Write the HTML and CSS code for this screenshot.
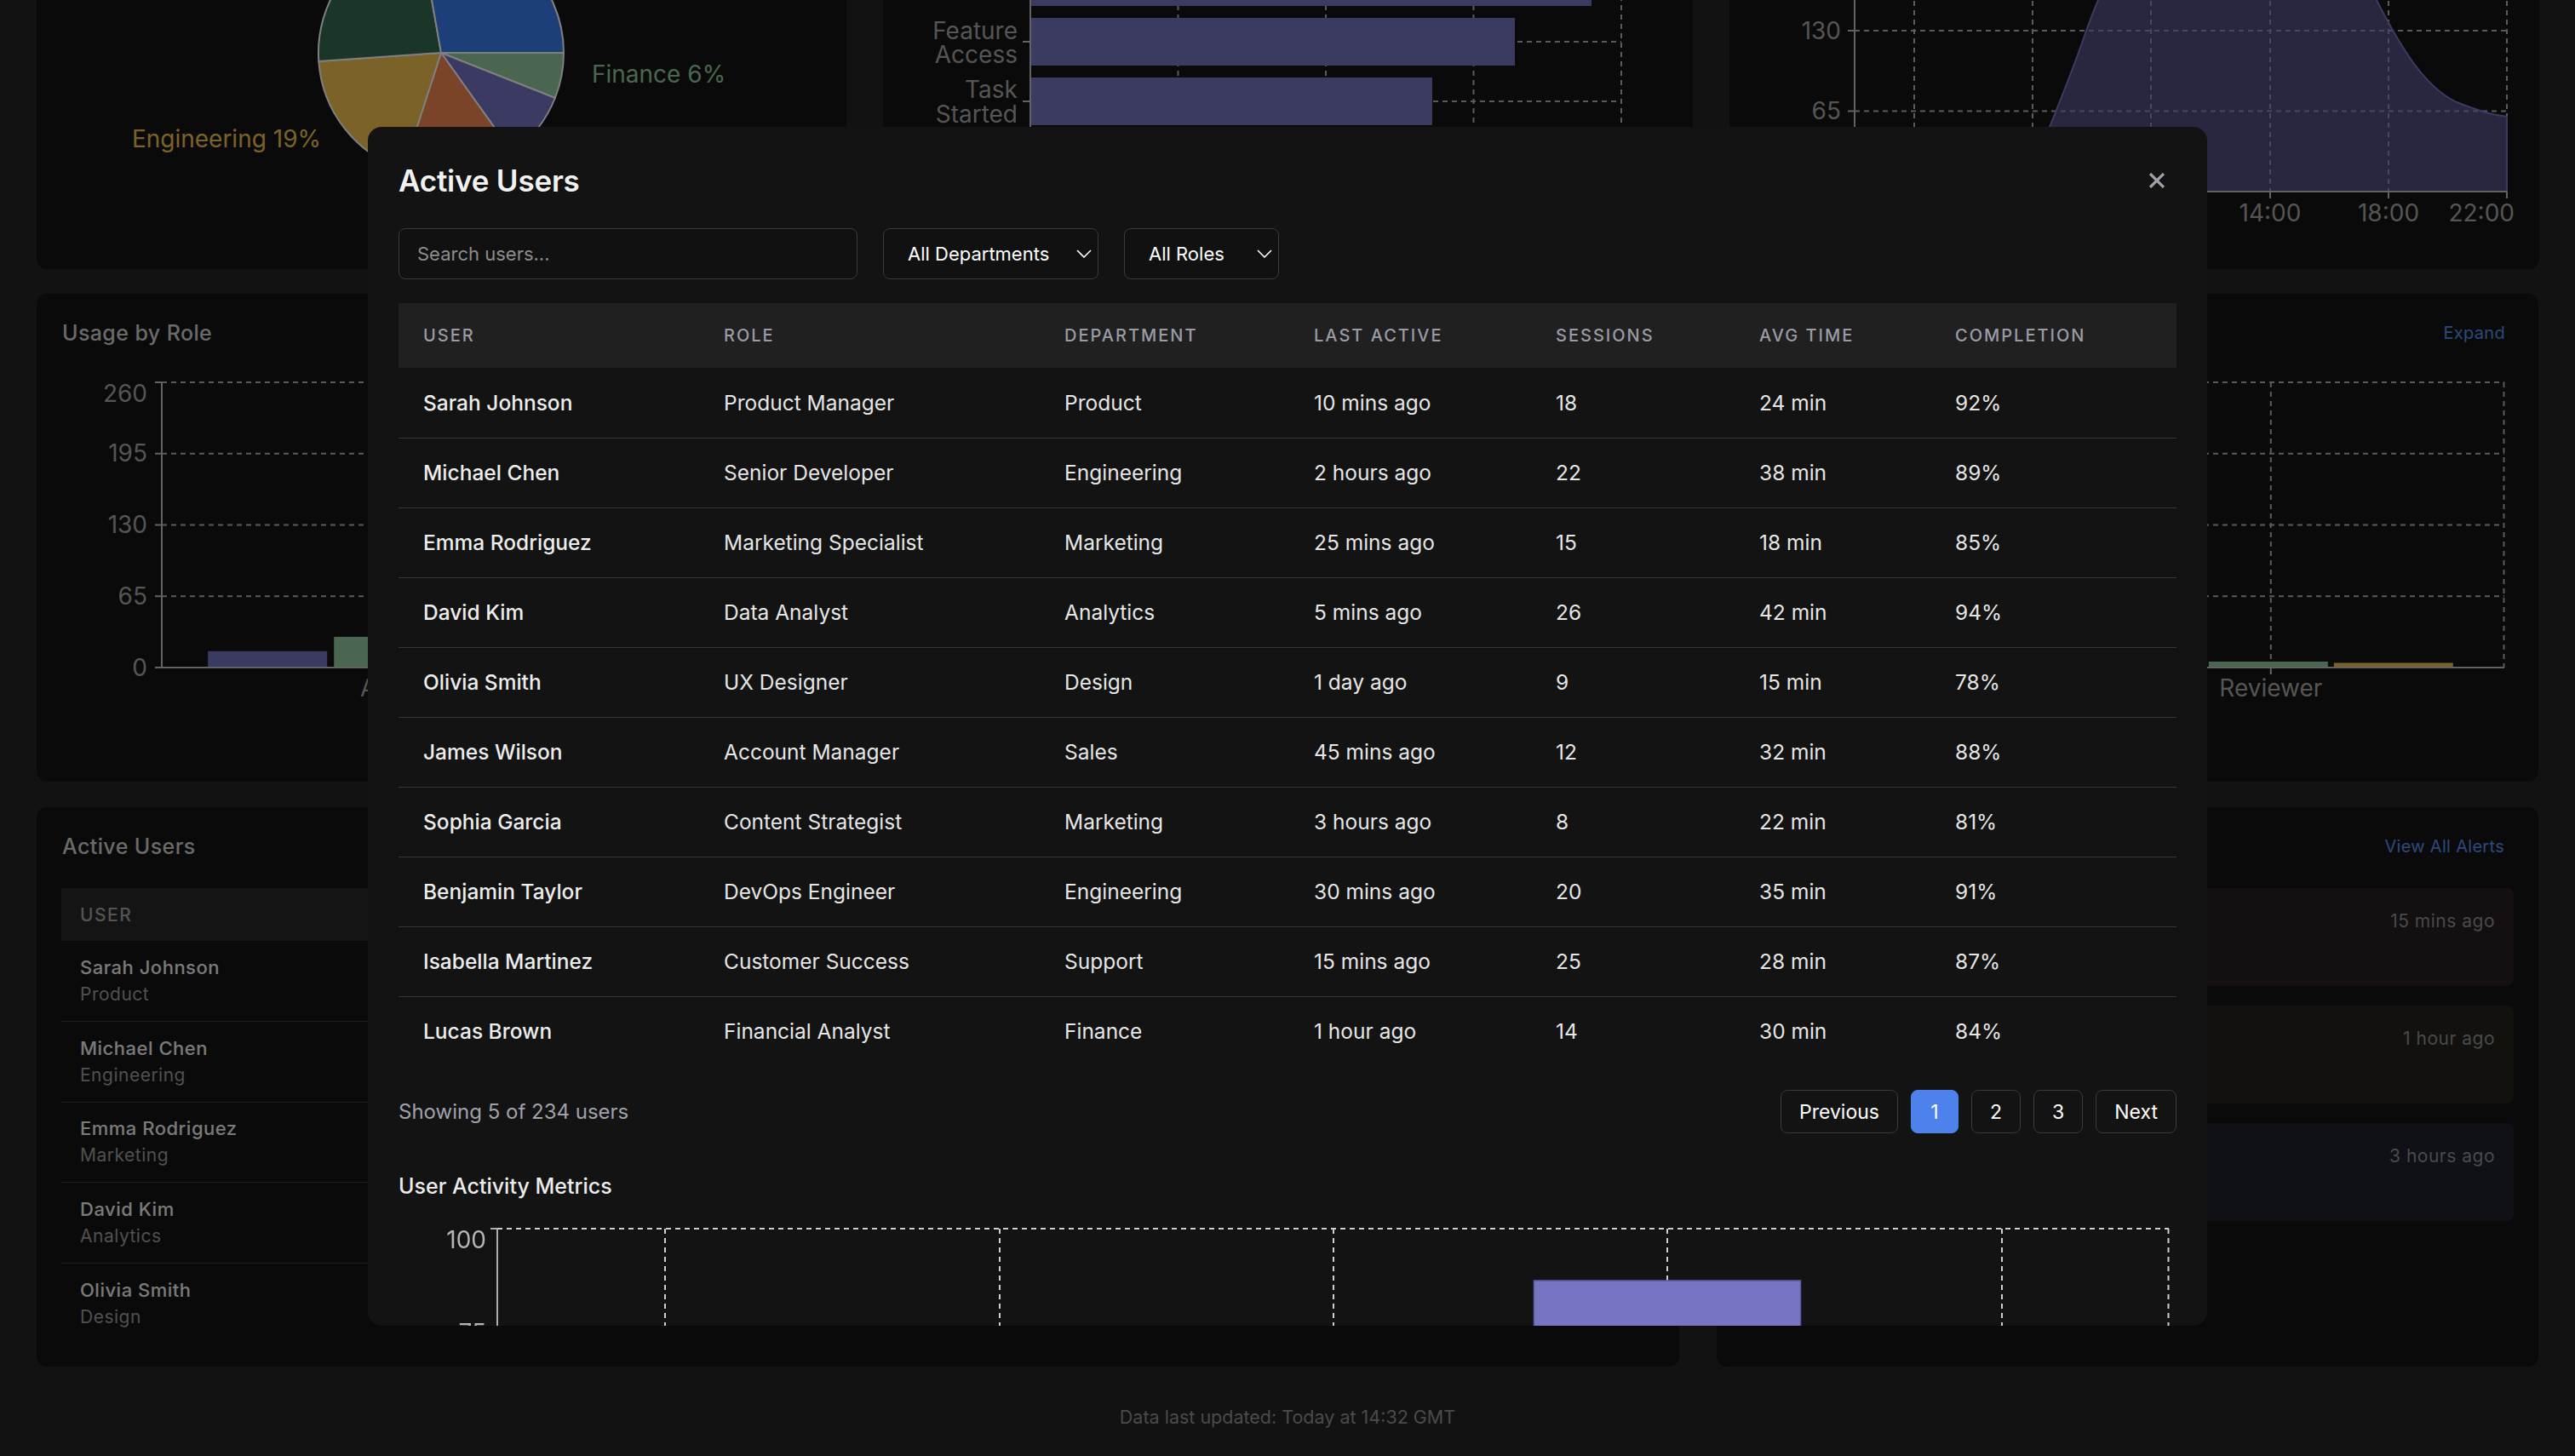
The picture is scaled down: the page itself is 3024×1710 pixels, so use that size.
FILE: index.html
```html
<!DOCTYPE html>
<html lang="en">
<head>
<meta charset="utf-8">
<title>Analytics Dashboard – Active Users</title>
<link rel="stylesheet" href="styles.css">
</head>
<body>
<main class="page">
  <section class="row row-3col">
    <article class="card card-tall">
      <header class="card-head"><h3 class="card-title">Users by Department</h3></header>
      <svg class="chart" width="893" height="465" viewBox="0 0 893 465">
        <g stroke="#ffffff" stroke-width="2">
          <path d="M446,240 L590,240 A144,144 0 0 1 579.9,293 Z" fill="#94cca0"/>
          <path d="M446,240 L579.9,293 A144,144 0 0 1 529.6,357.2 Z" fill="#7674c6"/>
          <path d="M446,240 L529.6,357.2 A144,144 0 0 1 401.5,377 Z" fill="#f48852"/>
          <path d="M446,240 L401.5,377 A144,144 0 0 1 302.3,250 Z" fill="#f4c452"/>
          <path d="M446,240 L302.3,250 A144,144 0 0 1 421,98.2 Z" fill="#366c52"/>
          <path d="M446,240 L421,98.2 A144,144 0 0 1 590,240 Z" fill="#387ef4"/>
        </g>
        <text x="572" y="100" style="fill:#387ef4">Product 28%</text>
        <text x="300" y="128" text-anchor="end" style="fill:#5aa07e">Marketing 23%</text>
        <text x="305" y="351" text-anchor="end" style="fill:#f4c452">Engineering 19%</text>
        <text x="480" y="440" style="fill:#f48852">Sales 15%</text>
        <text x="600" y="370" style="fill:#7674c6">Support 9%</text>
        <text x="623" y="275" style="fill:#94cca0">Finance 6%</text>
      </svg>
    </article>
    <article class="card card-tall">
      <header class="card-head"><h3 class="card-title">User Journey Funnel</h3></header>
      <svg class="chart" width="893" height="465" viewBox="0 0 893 465">
        <g class="grid">
          <line x1="317.5" y1="52" x2="317.5" y2="402"/>
          <line x1="491" y1="52" x2="491" y2="402"/>
          <line x1="664.5" y1="52" x2="664.5" y2="402"/>
          <line x1="838" y1="52" x2="838" y2="402"/>
          <line x1="144" y1="87" x2="838" y2="87"/>
          <line x1="144" y1="157" x2="838" y2="157"/>
          <line x1="144" y1="227" x2="838" y2="227"/>
          <line x1="144" y1="297" x2="838" y2="297"/>
          <line x1="144" y1="367" x2="838" y2="367"/>
        </g>
        <g fill="#7775c2">
          <rect x="144" y="59" width="694" height="56"/>
          <rect x="144" y="129" width="659" height="56"/>
          <rect x="144" y="199" width="569" height="56"/>
          <rect x="144" y="269" width="472" height="56"/>
          <rect x="144" y="339" width="380" height="56"/>
        </g>
        <g class="axis">
          <line x1="144" y1="52" x2="144" y2="402"/>
          <line x1="135" y1="87" x2="144" y2="87"/>
          <line x1="135" y1="157" x2="144" y2="157"/>
          <line x1="135" y1="227" x2="144" y2="227"/>
          <line x1="135" y1="297" x2="144" y2="297"/>
          <line x1="135" y1="367" x2="144" y2="367"/>
        </g>
        <g text-anchor="end">
          <text x="129" y="96">Visit</text>
          <text x="129" y="164">Sign Up</text>
          <text x="129" y="224"><tspan x="129" dy="0">Feature</tspan><tspan x="129" dy="28">Access</tspan></text>
          <text x="129" y="293"><tspan x="129" dy="0">Task</tspan><tspan x="129" dy="29">Started</tspan></text>
          <text x="129" y="363"><tspan x="129" dy="0">Task</tspan><tspan x="129" dy="28">Done</tspan></text>
        </g>
      </svg>
    </article>
    <article class="card card-tall">
      <header class="card-head"><h3 class="card-title">Hourly Activity</h3></header>
      <svg class="chart" width="893" height="465" viewBox="0 0 893 465">
        <g class="grid">
          <line x1="118" y1="25" x2="884" y2="25"/>
          <line x1="118" y1="119.5" x2="884" y2="119.5"/>
          <line x1="118" y1="214" x2="884" y2="214"/>
          <line x1="118" y1="308.5" x2="884" y2="308.5"/>
          <line x1="188" y1="25" x2="188" y2="403"/>
          <line x1="327" y1="25" x2="327" y2="403"/>
          <line x1="466" y1="25" x2="466" y2="403"/>
          <line x1="606" y1="25" x2="606" y2="403"/>
          <line x1="745" y1="25" x2="745" y2="403"/>
          <line x1="884" y1="25" x2="884" y2="403"/>
        </g>
        <path d="M118,385 C150,386 250,392 300,380 C325,372 340,345 347,327 C362,290 378,250 390,214 C395,200 399,190 404,178 C430,100 470,35 540,30 C620,28 690,110 731,178 C760,235 790,285 830,300 S870,312 884,315 L884,403 L118,403 Z" fill="#7775c2" fill-opacity="0.62" stroke="#7775c2" stroke-width="2"/>
        <g class="axis">
          <line x1="118" y1="25" x2="118" y2="403"/>
          <line x1="118" y1="403" x2="884" y2="403"/>
          <line x1="110" y1="25" x2="118" y2="25"/>
          <line x1="110" y1="119.5" x2="118" y2="119.5"/>
          <line x1="110" y1="214" x2="118" y2="214"/>
          <line x1="110" y1="308.5" x2="118" y2="308.5"/>
          <line x1="110" y1="403" x2="118" y2="403"/>
          <line x1="188" y1="403" x2="188" y2="411"/>
          <line x1="327" y1="403" x2="327" y2="411"/>
          <line x1="466" y1="403" x2="466" y2="411"/>
          <line x1="606" y1="403" x2="606" y2="411"/>
          <line x1="745" y1="403" x2="745" y2="411"/>
          <line x1="884" y1="403" x2="884" y2="411"/>
        </g>
        <g text-anchor="end">
          <text x="102" y="44">260</text>
          <text x="102" y="129">195</text>
          <text x="102" y="224">130</text>
          <text x="102" y="318">65</text>
          <text x="102" y="412">0</text>
        </g>
        <g text-anchor="middle">
          <text x="188" y="438">02:00</text>
          <text x="327" y="438">06:00</text>
          <text x="466" y="438">10:00</text>
          <text x="606" y="438">14:00</text>
          <text x="745" y="438">18:00</text>
        </g>
        <text x="893" y="438" text-anchor="end">22:00</text>
      </svg>
    </article>
  </section>

  <section class="row row-full">
    <article class="card card-usage">
      <header class="card-head"><h3 class="card-title">Usage by Role</h3><a class="card-link" href="#">Expand</a></header>
      <svg class="chart" width="2869" height="469" viewBox="0 0 2869 469">
        <g class="grid">
          <line x1="117" y1="29" x2="2868" y2="29"/>
          <line x1="117" y1="112.75" x2="2868" y2="112.75"/>
          <line x1="117" y1="196.5" x2="2868" y2="196.5"/>
          <line x1="117" y1="280.25" x2="2868" y2="280.25"/>
          <line x1="392.2" y1="29" x2="392.2" y2="364"/>
          <line x1="942.6" y1="29" x2="942.6" y2="364"/>
          <line x1="1493" y1="29" x2="1493" y2="364"/>
          <line x1="2043.4" y1="29" x2="2043.4" y2="364"/>
          <line x1="2593.8" y1="29" x2="2593.8" y2="364"/>
          <line x1="2867.5" y1="29" x2="2867.5" y2="364"/>
        </g>
        <g>
          <rect x="171.2" y="344.7" width="140" height="19.3" fill="#7775c2"/>
          <rect x="319.2" y="327.9" width="140" height="36.1" fill="#94cca0"/>
          <rect x="466.2" y="335.7" width="140" height="28.3" fill="#f4c452"/>
          <rect x="721.6" y="306" width="140" height="58" fill="#7775c2"/>
          <rect x="869.6" y="325.3" width="140" height="38.7" fill="#94cca0"/>
          <rect x="1016.6" y="340.8" width="140" height="23.2" fill="#f4c452"/>
          <rect x="1272" y="286.7" width="140" height="77.3" fill="#7775c2"/>
          <rect x="1420" y="312.5" width="140" height="51.5" fill="#94cca0"/>
          <rect x="1567" y="331.8" width="140" height="32.2" fill="#f4c452"/>
          <rect x="1822.4" y="318.9" width="140" height="45.1" fill="#7775c2"/>
          <rect x="1970.4" y="338.2" width="140" height="25.8" fill="#94cca0"/>
          <rect x="2117.4" y="348.5" width="140" height="15.5" fill="#f4c452"/>
          <rect x="2372.8" y="353.7" width="140" height="10.3" fill="#7775c2"/>
          <rect x="2520.8" y="357" width="140" height="7" fill="#94cca0"/>
          <rect x="2667.8" y="358.5" width="140" height="5.5" fill="#f4c452"/>
        </g>
        <g class="axis">
          <line x1="117" y1="29" x2="117" y2="364"/>
          <line x1="117" y1="364" x2="2868" y2="364"/>
          <line x1="109" y1="29" x2="117" y2="29"/>
          <line x1="109" y1="112.75" x2="117" y2="112.75"/>
          <line x1="109" y1="196.5" x2="117" y2="196.5"/>
          <line x1="109" y1="280.25" x2="117" y2="280.25"/>
          <line x1="109" y1="364" x2="117" y2="364"/>
          <line x1="392.2" y1="364" x2="392.2" y2="372"/>
          <line x1="942.6" y1="364" x2="942.6" y2="372"/>
          <line x1="1493" y1="364" x2="1493" y2="372"/>
          <line x1="2043.4" y1="364" x2="2043.4" y2="372"/>
          <line x1="2593.8" y1="364" x2="2593.8" y2="372"/>
        </g>
        <g text-anchor="end">
          <text x="100" y="52">260</text>
          <text x="100" y="122">195</text>
          <text x="100" y="206">130</text>
          <text x="100" y="290">65</text>
          <text x="100" y="374">0</text>
        </g>
        <g text-anchor="middle">
          <text x="392.2" y="398">Admin</text>
          <text x="942.6" y="398">Manager</text>
          <text x="1493" y="398">Analyst</text>
          <text x="2043.4" y="398">Viewer</text>
          <text x="2593.8" y="398">Reviewer</text>
        </g>
      </svg>
    </article>
  </section>

  <section class="row row-2-1">
    <article class="card card-users">
      <header class="card-head"><h3 class="card-title">Active Users</h3></header>
      <table class="mini-table">
        <thead>
          <tr><th>User</th><th>Role</th><th>Status</th><th>Sessions</th><th>Last Active</th></tr>
        </thead>
        <tbody>
          <tr><td><div class="mini-name">Sarah Johnson</div><div class="mini-sub">Product</div></td><td>Product Manager</td><td>Online</td><td>18</td><td>10 mins ago</td></tr>
          <tr><td><div class="mini-name">Michael Chen</div><div class="mini-sub">Engineering</div></td><td>Senior Developer</td><td>Away</td><td>22</td><td>2 hours ago</td></tr>
          <tr><td><div class="mini-name">Emma Rodriguez</div><div class="mini-sub">Marketing</div></td><td>Marketing Specialist</td><td>Online</td><td>15</td><td>25 mins ago</td></tr>
          <tr><td><div class="mini-name">David Kim</div><div class="mini-sub">Analytics</div></td><td>Data Analyst</td><td>Online</td><td>26</td><td>5 mins ago</td></tr>
          <tr><td><div class="mini-name">Olivia Smith</div><div class="mini-sub">Design</div></td><td>UX Designer</td><td>Offline</td><td>9</td><td>1 day ago</td></tr>
        </tbody>
      </table>
    </article>
    <article class="card card-alerts">
      <header class="card-head"><h3 class="card-title">Recent Alerts</h3><a class="card-link" href="#">View All Alerts</a></header>
      <div class="alert-list">
        <div class="alert alert-red"><div class="alert-body"><div class="alert-title">High error rate</div><div class="alert-text">API errors above threshold</div></div><span class="alert-time">15 mins ago</span></div>
        <div class="alert alert-amber"><div class="alert-body"><div class="alert-title">Usage spike</div><div class="alert-text">Traffic 40% above average</div></div><span class="alert-time">1 hour ago</span></div>
        <div class="alert alert-blue"><div class="alert-body"><div class="alert-title">New release</div><div class="alert-text">Version 2.4 deployed</div></div><span class="alert-time">3 hours ago</span></div>
      </div>
    </article>
  </section>

  <footer class="page-foot">Data last updated: Today at 14:32 GMT</footer>
</main>

<div class="backdrop">
  <div class="modal" role="dialog" aria-label="Active Users">
    <header class="modal-head">
      <h2 class="modal-title">Active Users</h2>
      <button class="close-btn" aria-label="Close">
        <svg width="20" height="18" viewBox="0 0 20 18"><path d="M2 1 L18 17 M18 1 L2 17" stroke="#a1a1aa" stroke-width="3.2" fill="none"/></svg>
      </button>
    </header>
    <div class="filters">
      <input class="search" type="text" placeholder="Search users...">
      <div class="select select-dept"><span>All Departments</span><svg width="18" height="10" viewBox="0 0 18 10"><path d="M1 1 L9 9 L17 1" fill="none" stroke="#ffffff" stroke-width="1.6"/></svg></div>
      <div class="select select-role"><span>All Roles</span><svg width="18" height="10" viewBox="0 0 18 10"><path d="M1 1 L9 9 L17 1" fill="none" stroke="#ffffff" stroke-width="1.6"/></svg></div>
    </div>
    <table class="users-table">
      <colgroup>
        <col class="c-user"><col class="c-role"><col class="c-dept"><col class="c-last"><col class="c-sess"><col class="c-avg"><col class="c-comp">
      </colgroup>
      <thead>
        <tr><th>User</th><th>Role</th><th>Department</th><th>Last Active</th><th>Sessions</th><th>Avg Time</th><th>Completion</th></tr>
      </thead>
      <tbody>
        <tr><td class="name">Sarah Johnson</td><td>Product Manager</td><td>Product</td><td>10 mins ago</td><td>18</td><td>24 min</td><td>92%</td></tr>
        <tr><td class="name">Michael Chen</td><td>Senior Developer</td><td>Engineering</td><td>2 hours ago</td><td>22</td><td>38 min</td><td>89%</td></tr>
        <tr><td class="name">Emma Rodriguez</td><td>Marketing Specialist</td><td>Marketing</td><td>25 mins ago</td><td>15</td><td>18 min</td><td>85%</td></tr>
        <tr><td class="name">David Kim</td><td>Data Analyst</td><td>Analytics</td><td>5 mins ago</td><td>26</td><td>42 min</td><td>94%</td></tr>
        <tr><td class="name">Olivia Smith</td><td>UX Designer</td><td>Design</td><td>1 day ago</td><td>9</td><td>15 min</td><td>78%</td></tr>
        <tr><td class="name">James Wilson</td><td>Account Manager</td><td>Sales</td><td>45 mins ago</td><td>12</td><td>32 min</td><td>88%</td></tr>
        <tr><td class="name">Sophia Garcia</td><td>Content Strategist</td><td>Marketing</td><td>3 hours ago</td><td>8</td><td>22 min</td><td>81%</td></tr>
        <tr><td class="name">Benjamin Taylor</td><td>DevOps Engineer</td><td>Engineering</td><td>30 mins ago</td><td>20</td><td>35 min</td><td>91%</td></tr>
        <tr><td class="name">Isabella Martinez</td><td>Customer Success</td><td>Support</td><td>15 mins ago</td><td>25</td><td>28 min</td><td>87%</td></tr>
        <tr><td class="name">Lucas Brown</td><td>Financial Analyst</td><td>Finance</td><td>1 hour ago</td><td>14</td><td>30 min</td><td>84%</td></tr>
      </tbody>
    </table>
    <div class="table-foot">
      <span class="showing">Showing 5 of 234 users</span>
      <nav class="pager">
        <button class="page-btn">Previous</button>
        <button class="page-btn active">1</button>
        <button class="page-btn">2</button>
        <button class="page-btn">3</button>
        <button class="page-btn">Next</button>
      </nav>
    </div>
    <h4 class="metrics-title">User Activity Metrics</h4>
    <svg class="metrics-chart" width="2088" height="560" viewBox="0 0 2088 560">
      <g class="m-grid">
        <line x1="116" y1="20" x2="2079" y2="20"/>
        <line x1="116" y1="142" x2="2079" y2="142"/>
        <line x1="116" y1="264" x2="2079" y2="264"/>
        <line x1="116" y1="386" x2="2079" y2="386"/>
        <line x1="313" y1="20" x2="313" y2="508"/>
        <line x1="706" y1="20" x2="706" y2="508"/>
        <line x1="1098" y1="20" x2="1098" y2="508"/>
        <line x1="1490" y1="20" x2="1490" y2="508"/>
        <line x1="1883" y1="20" x2="1883" y2="508"/>
        <line x1="2078.5" y1="20" x2="2078.5" y2="508"/>
      </g>
      <g fill="#7775c2" stroke="#5d5aa6" stroke-width="1.5">
        <rect x="156.5" y="205.4" width="313" height="302.6"/>
        <rect x="549.5" y="166.4" width="313" height="341.6"/>
        <rect x="941.5" y="176.2" width="313" height="331.8"/>
        <rect x="1333.5" y="81" width="313" height="427"/>
        <rect x="1726.5" y="239.6" width="313" height="268.4"/>
      </g>
      <g class="m-axis">
        <line x1="116" y1="20" x2="116" y2="508"/>
        <line x1="116" y1="508" x2="2079" y2="508"/>
        <line x1="108" y1="20" x2="116" y2="20"/>
        <line x1="108" y1="142" x2="116" y2="142"/>
        <line x1="108" y1="264" x2="116" y2="264"/>
        <line x1="108" y1="386" x2="116" y2="386"/>
        <line x1="108" y1="508" x2="116" y2="508"/>
      </g>
      <g text-anchor="end">
        <text x="103" y="43">100</text>
        <text x="103" y="152">75</text>
        <text x="103" y="274">50</text>
        <text x="103" y="396">25</text>
        <text x="103" y="518">0</text>
      </g>
      <g text-anchor="middle">
        <text x="313" y="548">Logins</text>
        <text x="706" y="548">Sessions</text>
        <text x="1098" y="548">Page Views</text>
        <text x="1490" y="548">Completion</text>
        <text x="1883" y="548">Retention</text>
      </g>
    </svg>
  </div>
</div>
</body>
</html>
```

FILE: styles.css
```css
* { box-sizing: border-box; }
html, body { margin: 0; height: 100%; }
body {
  background: #242424;
  font-family: Inter, "Noto Sans", sans-serif;
  color: #e5e5e5;
  overflow: hidden;
}

/* dashboard (scrolled down behind the modal) */
.page { padding: 0 43px; margin-top: -257px; }
.row { display: grid; }
.row-3col { grid-template-columns: repeat(3, 1fr); column-gap: 43px; }
.row-full { margin-top: 29px; }
.row-2-1 { margin-top: 30px; grid-template-columns: 2fr 1fr; column-gap: 44px; }

.card { background: #141414; border-radius: 12px; padding: 29px; }
.card-tall { height: 573px; }
.card-head {
  display: flex; justify-content: space-between; align-items: center;
  height: 34px; margin-bottom: 16px;
}
.card-title { margin: 0; font-size: 25px; font-weight: 500; color: #d4d4d4; letter-spacing: 0.4px; }
.card-link { font-size: 20px; color: #5795f5; text-decoration: none; letter-spacing: 0.3px; }

.chart { display: block; overflow: visible; }
.chart text { font-family: Inter, sans-serif; font-size: 28px; fill: #aaaaaa; }
.chart .grid line { stroke: #b4b4b4; stroke-width: 2; stroke-dasharray: 6 5; }
.chart .axis line { stroke: #c4c4c4; stroke-width: 2; }

.card-usage { height: 573px; padding: 29px 39px 29px 30px; }
.card-usage .card-head { margin-bottom: 12px; }

.card-users, .card-alerts { height: 657px; overflow: hidden; }
.card-users .card-head, .card-alerts .card-head { margin-bottom: 32px; }
.card-users .card-title { padding-left: 1px; }
.card-alerts .card-head { padding-right: 11px; }

.mini-table { width: 100%; border-collapse: collapse; }
.mini-table th {
  height: 62px; background: #282828; text-align: left; padding: 0 22px;
  font-size: 21px; font-weight: 500; letter-spacing: 1.5px; color: #a8a8a8; text-transform: uppercase;
}
.mini-table td {
  height: 94.5px; padding: 0 22px; border-bottom: 1px solid #3a3a3a;
  vertical-align: middle; font-size: 21px; color: #d0d0d0;
}
.mini-table tr:last-child td { border-bottom: 0; }
.mini-name { font-size: 22px; line-height: 26px; font-weight: 500; color: #f5f5f5; letter-spacing: 0.5px; }
.mini-sub { font-size: 21px; line-height: 26px; color: #a0a0a0; margin-top: 6px; letter-spacing: 0.5px; }

.alert-list { display: flex; flex-direction: column; gap: 23px; }
.alert {
  height: 115px; border-radius: 8px; padding: 26px 22px 0 24px;
  display: flex; justify-content: space-between; align-items: flex-start;
}
.alert-red { background: #281f21; }
.alert-amber { background: #24221a; }
.alert-blue { background: #1e222c; }
.alert-title { font-size: 22px; line-height: 26px; font-weight: 500; color: #eeeeee; }
.alert-text { font-size: 21px; line-height: 26px; color: #a0a0a0; margin-top: 8px; }
.alert-time { font-size: 21px; line-height: 26px; color: #949494; letter-spacing: 0.5px; }

.page-foot {
  text-align: center; margin-top: 47px;
  font-size: 21.5px; line-height: 24px; color: #959595;
}

/* modal */
.backdrop {
  position: fixed; inset: 0; background: rgba(0, 0, 0, 0.5);
  display: flex; align-items: center; justify-content: center;
}
.modal {
  width: 2160px; height: 1408px; margin-top: -4px;
  background: #131313; border-radius: 16px;
  padding: 36px 36px 0; overflow: hidden;
}
.modal-head { display: flex; justify-content: space-between; align-items: center; height: 54px; }
.modal-title { margin: 0; font-size: 35px; font-weight: 600; color: #f2f2f2; letter-spacing: -0.2px; }
.close-btn {
  width: 46px; height: 46px; padding: 0; border: 0; background: none;
  display: flex; align-items: center; justify-content: center;
}

.filters { display: flex; gap: 30px; margin-top: 29px; }
.search {
  width: 539px; height: 60px; border: 1.5px solid #3a3a3a; border-radius: 8px;
  background: #111111; color: #eeeeee; padding: 0 21px;
  font-family: Inter, sans-serif; font-size: 22px; outline: none;
}
.search::placeholder { color: #8d8d8d; }
.select {
  height: 60px; border: 1.5px solid #3a3a3a; border-radius: 8px; background: #111111;
  display: flex; align-items: center; justify-content: space-between;
  padding: 0 7px 0 28px; font-size: 22px; color: #ffffff;
}
.select-dept { width: 253px; }
.select-role { width: 182px; }

.users-table { width: 100%; margin-top: 28px; border-collapse: collapse; table-layout: fixed; }
.c-user { width: 353px; }
.c-role { width: 400px; }
.c-dept { width: 293px; }
.c-last { width: 284px; }
.c-sess { width: 239px; }
.c-avg { width: 230px; }
.c-comp { width: 289px; }
.users-table th {
  height: 76px; background: #202020; text-align: left; padding: 0 0 0 29px;
  font-size: 20px; font-weight: 500; letter-spacing: 2px; color: #9b9ba5; text-transform: uppercase;
}
.users-table td {
  height: 82px; padding: 0 0 0 29px; border-bottom: 1px solid #363636;
  font-size: 24.5px; color: #e6e6e6; white-space: nowrap;
}
.users-table tr:last-child td { border-bottom: 0; }
.users-table .name { font-weight: 500; color: #ededed; }

.table-foot { display: flex; justify-content: space-between; align-items: center; margin-top: 28px; }
.showing { font-size: 24px; color: #a1a1aa; }
.pager { display: flex; gap: 15px; }
.page-btn {
  height: 51px; min-width: 56px; padding: 0 21px;
  border: 1.5px solid #3a3a3a; border-radius: 8px; background: transparent;
  color: #ffffff; font-family: Inter, sans-serif; font-size: 23px;
}
.page-btn.active { background: #4d82ec; border-color: #4d82ec; }

.metrics-title { margin: 46px 0 0; font-size: 25px; font-weight: 500; line-height: 32px; color: #ececec; }
.metrics-chart { display: block; margin-top: 14px; }
.metrics-chart text { font-family: Inter, sans-serif; font-size: 28px; fill: #b5b5b5; }
.metrics-chart .m-grid line { stroke: #cfcfcf; stroke-width: 2; stroke-dasharray: 6 5; }
.metrics-chart .m-axis line { stroke: #b0b0b0; stroke-width: 2; }
```
